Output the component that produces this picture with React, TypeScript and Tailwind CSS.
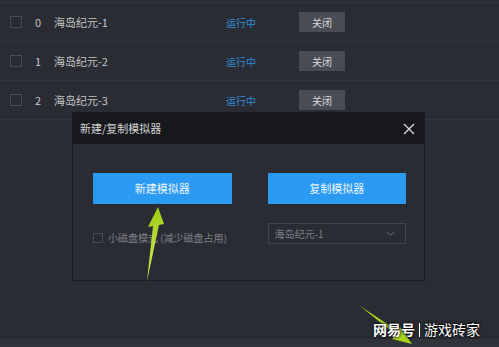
import React from "react";

const rows = [
  { id: 0, name: "海岛纪元-1" },
  { id: 1, name: "海岛纪元-2" },
  { id: 2, name: "海岛纪元-3" },
];

const font = { fontFamily: '"Noto Sans CJK SC", "Noto Sans", sans-serif' };

const App = () => {
  return (
    <div
      className="relative w-[499px] h-[347px] overflow-hidden bg-[#2a2c33] flex flex-col"
      style={font}
    >
      <div className="h-[3px] border-b border-[#33353c]" />
      <div className="flex flex-col">
        {rows.map((row) => (
          <div
            key={row.id}
            className="flex items-center h-[39px] border-b border-[#33353c] text-[11px] text-[#c4c5c8]"
          >
            <div className="ml-[10px] w-[12px] h-[12px] border border-[#4a4c53]" />
            <div className="ml-[13px] w-[19px]">{row.id}</div>
            <div className="w-[172px]">{row.name}</div>
            <div className="w-[73px] text-[10px] text-[#2f8fdb]">运行中</div>
            <div className="w-[46px] h-[20px] bg-[#4a4c55] text-[10px] text-[#d8d8da] flex items-center justify-center">
              关闭
            </div>
          </div>
        ))}
      </div>
      <div className="flex-1" />
      <div className="h-[8px] bg-[#31333a]" />

      {/* modal */}
      <div className="absolute left-[72px] top-[112px] w-[353px] h-[169px] border border-[#1b1c20] bg-[#2a2c33] flex flex-col">
        <div className="h-[31px] bg-[#17181c] flex items-center justify-between pl-[7px] pr-[8px]">
          <span className="text-[11px] text-[#d4d4d6]">新建/复制模拟器</span>
          <svg width="14" height="14" viewBox="0 0 14 14">
            <path d="M2 2 L12 12 M12 2 L2 12" stroke="#d6d6d8" strokeWidth="1.4" />
          </svg>
        </div>
        <div className="grid grid-cols-2 gap-[36px] pl-[20px] pr-[18px] pt-[29px]">
          <div className="flex flex-col">
            <div className="h-[31px] bg-[#2b9af3] text-[11px] text-[#eaf4ff] flex items-center justify-center">
              新建模拟器
            </div>
            <div className="mt-[26px] flex items-center text-[10px] text-[#7e8087] whitespace-nowrap">
              <div className="w-[10px] h-[10px] border border-[#4a4c53] shrink-0" />
              <span className="ml-[5px]">小磁盘模式 (减少磁盘占用)</span>
            </div>
          </div>
          <div className="flex flex-col">
            <div className="h-[31px] bg-[#2b9af3] text-[11px] text-[#eaf4ff] flex items-center justify-center">
              复制模拟器
            </div>
            <div className="mt-[19px] h-[21px] border border-[#43454c] flex items-center justify-between pl-[6px] pr-[10px] text-[10px] text-[#7e8087]">
              <span>海岛纪元-1</span>
              <svg width="9" height="6" viewBox="0 0 9 6">
                <path d="M1 1 L4.5 4.5 L8 1" stroke="#6c6e75" strokeWidth="1" fill="none" />
              </svg>
            </div>
          </div>
        </div>
      </div>

      {/* arrows */}
      <svg className="absolute left-0 top-0" width="499" height="347" viewBox="0 0 499 347">
        <defs>
          <linearGradient id="g1" x1="0" y1="1" x2="0" y2="0">
            <stop offset="0" stopColor="#d6ee5a" />
            <stop offset="1" stopColor="#9ccc14" />
          </linearGradient>
        </defs>
        <path
          d="M147 281 L153 226 L148 227 L158 207 L164 224 L159 225 Z"
          fill="url(#g1)"
        />
        <path
          d="M360 306 L398 331 L400 327 L412 344 L392 339 L396 335 Z"
          fill="#a8d41c"
        />
      </svg>

      {/* watermark */}
      <div
        className="absolute left-[373px] top-[319px] flex items-center text-[14px] font-bold text-white"
        style={{ textShadow: "0 0 2px #000, 0 0 3px #000" }}
      >
        <span>网易号</span>
        <span className="mx-[4px] w-[1px] h-[14px] bg-white" />
        <span className="font-normal">游戏砖家</span>
      </div>
    </div>
  );
};

export default App;
